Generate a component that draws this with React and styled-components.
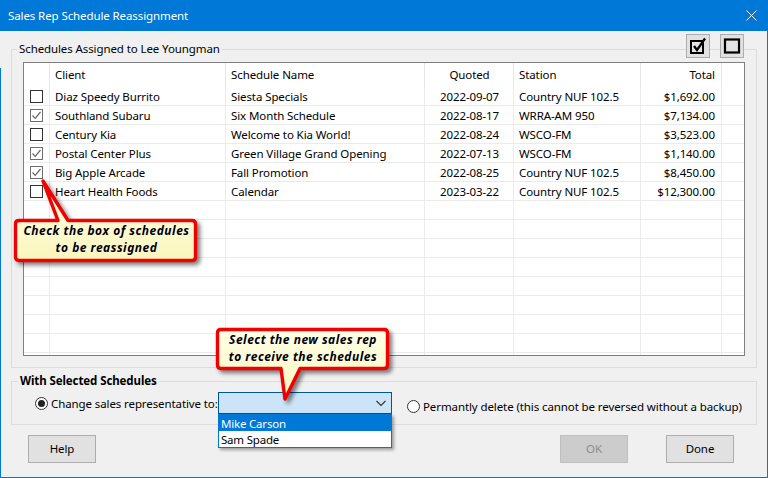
import { createGlobalStyle, styled } from "styled-components";

const GlobalStyle = createGlobalStyle`
  html, body {
    margin: 0;
    padding: 0;
    background: #f0f0f0;
  }
  body {
    font-family: "Noto Sans", "Open Sans", sans-serif;
    font-size: 11.5px;
    letter-spacing: -0.1px;
    color: #000;
  }
`;

const Window = styled.div`
  position: relative;
  width: 768px;
  height: 478px;
  box-sizing: border-box;
  overflow: hidden;
  background-color: #f0f0f0;
  background-image: linear-gradient(#0078d7, #0078d7), linear-gradient(#0078d7, #0078d7);
  background-position: left 68px, right 31px;
  background-size: 1px 100%;
  background-repeat: no-repeat;
  border-bottom: 1px solid #0078d7;
`;

const TitleBar = styled.div`
  display: flex;
  align-items: center;
  justify-content: space-between;
  height: 31px;
  padding: 0 11px 0 8px;
  background: #0078d7;
  color: #fff;
`;

const Body = styled.div`
  display: flex;
  flex-direction: column;
  padding: 10px 11px 0;
`;

const Group = styled.fieldset`
  margin: ${(p) => (p.$second ? "5px" : "0")} 0 0;
  padding: 0;
  min-width: 0;
  border: 1px solid #dcdcdc;
`;

const Legend = styled.legend`
  margin-left: ${(p) => (p.$bold ? "6px" : "5px")};
  padding: 0 2px;
  height: 16px;
  line-height: 15px;
  font-weight: ${(p) => (p.$bold ? 700 : 400)};
`;

const GridWrap = styled.div`
  padding: 5px 11px 11px;
`;

const Grid = styled.div`
  height: 292px;
  overflow: hidden;
  border: 1px solid #808080;
  background: #fff;
`;

const HeaderRow = styled.div`
  display: grid;
  grid-template-columns: 26px 176px 199px 89px 127px 81px 1fr;
  height: 24px;
`;

const HeaderCell = styled.div`
  box-sizing: border-box;
  display: flex;
  align-items: center;
  justify-content: ${(p) => p.$align || "flex-start"};
  padding: ${(p) => (p.$align === "center" ? "0 5px 1px 6px" : "0 6px 1px 5px")};
  border-right: ${(p) => (p.$last ? "none" : "1px solid #e5e5e5")};
`;

const Row = styled.div`
  display: grid;
  grid-template-columns: 26px 176px 199px 89px 127px 81px 1fr;
  height: 19px;
  box-sizing: border-box;
  border-bottom: 1px solid #ebebeb;
`;

const Cell = styled.div`
  box-sizing: border-box;
  display: flex;
  align-items: center;
  justify-content: ${(p) => p.$align || "flex-start"};
  padding: ${(p) => (p.$align === "center" ? "0 5px 0 6px" : "0 6px 0 5px")};
  white-space: nowrap;
  border-right: ${(p) => (p.$last ? "none" : "1px solid #ebebeb")};
`;

const CheckCell = styled(Cell)`
  padding: 0 1px 0 0;
  justify-content: center;
`;

const CheckBox = styled.span`
  display: flex;
  align-items: center;
  justify-content: center;
  box-sizing: border-box;
  width: 13px;
  height: 13px;
  background: #fff;
  border: 1px solid ${(p) => (p.$checked ? "#6e6e6e" : "#333")};
`;

const SideButton = styled.button`
  position: absolute;
  top: 34px;
  left: ${(p) => p.$left}px;
  display: flex;
  align-items: center;
  justify-content: center;
  width: 24px;
  height: 24px;
  padding: 0;
  background: #e1e1e1;
  border: 1px solid #adadad;
`;

const SelectedRow = styled.div`
  display: flex;
  align-items: flex-start;
  padding: 3px 0 7px 23px;
`;

const Option = styled.label`
  display: flex;
  align-items: center;
  gap: 3px;
  box-sizing: border-box;
  flex: none;
  height: 22px;
  white-space: nowrap;
  width: ${(p) => (p.$wide ? "183px" : "auto")};
  margin: ${(p) => (p.$wide ? "0" : "3px 0 0 15px")};
`;

const Radio = styled.span`
  display: flex;
  align-items: center;
  justify-content: center;
  box-sizing: border-box;
  flex: none;
  width: 13px;
  height: 13px;
  border: 1px solid #333;
  border-radius: 50%;
  background: #fff;
  &::after {
    content: "";
    display: ${(p) => (p.$on ? "block" : "none")};
    width: 7px;
    height: 7px;
    border-radius: 50%;
    background: #222;
  }
`;

const ComboWrap = styled.div`
  position: relative;
  flex: none;
  width: 174px;
`;

const Combo = styled.div`
  display: flex;
  align-items: center;
  justify-content: flex-end;
  box-sizing: border-box;
  height: 22px;
  padding-right: 4px;
  background: #cce4f7;
  border: 1px solid #005499;
`;

const ComboList = styled.div`
  position: absolute;
  top: 22px;
  left: 0;
  right: 0;
  z-index: 2;
  border: 1px solid #0078d7;
  background: #fff;
  box-shadow: 2px 2px 3px rgba(0, 0, 0, 0.35);
`;

const ComboItem = styled.div`
  height: 16px;
  line-height: 17px;
  padding: 0 2px;
  letter-spacing: -0.2px;
  background: ${(p) => (p.$selected ? "#0078d7" : "#fff")};
  color: ${(p) => (p.$selected ? "#fff" : "#000")};
`;

const Footer = styled.div`
  display: flex;
  gap: 38px;
  padding: 10px 23px 0 17px;
`;

const DialogButton = styled.button`
  width: 68px;
  height: 28px;
  padding: 0 0 1px;
  font: inherit;
  letter-spacing: inherit;
  color: ${(p) => (p.disabled ? "#8c8c8c" : "#000")};
  background: ${(p) => (p.disabled ? "#cccccc" : "#e1e1e1")};
  border: 1px solid ${(p) => (p.disabled ? "#bfbfbf" : "#adadad")};
  margin-right: ${(p) => (p.$push ? "auto" : "0")};
`;

const Callout = styled.div`
  position: absolute;
  z-index: 3;
  left: ${(p) => p.$left}px;
  top: ${(p) => p.$top}px;
  width: ${(p) => p.$width}px;
  height: ${(p) => p.$height}px;
`;

const CalloutShape = styled.svg`
  display: block;
  overflow: visible;
  filter: drop-shadow(3px 3px 2px rgba(0, 0, 0, 0.5));
`;

const CalloutText = styled.div`
  position: absolute;
  top: ${(p) => p.$top}px;
  left: 0;
  right: ${(p) => p.$inset || 0}px;
  text-align: center;
  font-size: 12px;
  font-weight: 700;
  font-style: italic;
  line-height: 17px;
  letter-spacing: 0.5px;
  text-shadow: 0 0 2px #fff;
`;

const rows = [
  ["Diaz Speedy Burrito", "Siesta Specials", "2022-09-07", "Country NUF 102.5", "$1,692.00", false],
  ["Southland Subaru", "Six Month Schedule", "2022-08-17", "WRRA-AM 950", "$7,134.00", true],
  ["Century Kia", "Welcome to Kia World!", "2022-08-24", "WSCO-FM", "$3,523.00", false],
  ["Postal Center Plus", "Green Village Grand Opening", "2022-07-13", "WSCO-FM", "$1,140.00", true],
  ["Big Apple Arcade", "Fall Promotion", "2022-08-25", "Country NUF 102.5", "$8,450.00", true],
  ["Heart Health Foods", "Calendar", "2023-03-22", "Country NUF 102.5", "$12,300.00", false],
];

const emptyRows = Array.from({ length: 9 }, (_, i) => i);

const Check = () => (
  <svg width="11" height="11" viewBox="0 0 11 11">
    <path d="M1.5 5.5 L4.2 8.3 L9.5 2" fill="none" stroke="#666" strokeWidth="1.2" />
  </svg>
);

const Gradient = ({ id }) => (
  <defs>
    <linearGradient id={id} x1="0" y1="0" x2="0" y2="1">
      <stop offset="0" stopColor="#ffffe6" />
      <stop offset="1" stopColor="#fbf6bd" />
    </linearGradient>
  </defs>
);

export default function App() {
  return (
    <Window>
      <GlobalStyle />
      <TitleBar>
        <span>Sales Rep Schedule Reassignment</span>
        <svg width="11" height="11" viewBox="0 0 11 11">
          <path d="M0.5 0.5 L10.5 10.5 M10.5 0.5 L0.5 10.5" stroke="#fff" strokeWidth="1" />
        </svg>
      </TitleBar>

      <Body>
        <Group>
          <Legend>Schedules Assigned to Lee Youngman</Legend>
          <GridWrap>
            <Grid>
              <HeaderRow>
                <HeaderCell />
                <HeaderCell>Client</HeaderCell>
                <HeaderCell>Schedule Name</HeaderCell>
                <HeaderCell $align="center">Quoted</HeaderCell>
                <HeaderCell>Station</HeaderCell>
                <HeaderCell $align="flex-end">Total</HeaderCell>
                <HeaderCell $last />
              </HeaderRow>
              {rows.map((r) => (
                <Row key={r[0]}>
                  <CheckCell>
                    <CheckBox $checked={r[5]}>{r[5] && <Check />}</CheckBox>
                  </CheckCell>
                  <Cell>{r[0]}</Cell>
                  <Cell>{r[1]}</Cell>
                  <Cell $align="center">{r[2]}</Cell>
                  <Cell>{r[3]}</Cell>
                  <Cell $align="flex-end">{r[4]}</Cell>
                  <Cell $last />
                </Row>
              ))}
              {emptyRows.map((i) => (
                <Row key={i}>
                  <Cell />
                  <Cell />
                  <Cell />
                  <Cell />
                  <Cell />
                  <Cell />
                  <Cell $last />
                </Row>
              ))}
            </Grid>
          </GridWrap>
        </Group>

        <Group $second>
          <Legend $bold>With Selected Schedules</Legend>
          <SelectedRow>
            <Option $wide>
              <Radio $on />
              Change sales representative to:
            </Option>
            <ComboWrap>
              <Combo>
                <svg width="12" height="12" viewBox="0 0 12 12">
                  <path d="M1.5 4 L6 8.5 L10.5 4" fill="none" stroke="#333" strokeWidth="1.1" />
                </svg>
              </Combo>
              <ComboList>
                <ComboItem $selected>Mike Carson</ComboItem>
                <ComboItem>Sam Spade</ComboItem>
              </ComboList>
            </ComboWrap>
            <Option>
              <Radio />
              Permantly delete (this cannot be reversed without a backup)
            </Option>
          </SelectedRow>
        </Group>

        <Footer>
          <DialogButton $push>Help</DialogButton>
          <DialogButton disabled>OK</DialogButton>
          <DialogButton>Done</DialogButton>
        </Footer>
      </Body>

      <SideButton $left={686}>
        <svg width="18" height="18" viewBox="0 0 18 18">
          <rect x="2" y="4" width="12" height="12" fill="#e4e4e4" stroke="#000" strokeWidth="2" />
          <path d="M5 9 L8 13 L16 1.5" fill="none" stroke="#000" strokeWidth="2.2" />
        </svg>
      </SideButton>
      <SideButton $left={720}>
        <svg width="18" height="18" viewBox="0 0 18 18">
          <rect x="2" y="2.5" width="14" height="13" fill="#e4e4e4" stroke="#000" strokeWidth="2.2" />
        </svg>
      </SideButton>

      <Callout $left={10} $top={175} $width={195} $height={97}>
        <CalloutShape width="195" height="97" viewBox="10 175 195 97">
          <Gradient id="noteA" />
          <path
            d="M19 220.5 L58 220.5 L43 181 L68 220.5 L192 220.5 Q195.5 220.5 195.5 224 L195.5 257 Q195.5 260.5 192 260.5 L19 260.5 Q15.5 260.5 15.5 257 L15.5 224 Q15.5 220.5 19 220.5 Z"
            fill="url(#noteA)"
            stroke="#f00000"
            strokeWidth="3.4"
            strokeLinejoin="round"
          />
        </CalloutShape>
        <CalloutText $top={47} $inset={2}>
          Check the box of schedules
          <br />
          to be reassigned
        </CalloutText>
      </Callout>

      <Callout $left={212} $top={324} $width={182} $height={80}>
        <CalloutShape width="182" height="80" viewBox="212 324 182 80">
          <Gradient id="noteB" />
          <path
            d="M221 329.5 L384 329.5 Q387.5 329.5 387.5 333 L387.5 365 Q387.5 368.5 384 368.5 L300 368.5 L285 399 L281 368.5 L221 368.5 Q217.5 368.5 217.5 365 L217.5 333 Q217.5 329.5 221 329.5 Z"
            fill="url(#noteB)"
            stroke="#f00000"
            strokeWidth="3.4"
            strokeLinejoin="round"
          />
        </CalloutShape>
        <CalloutText $top={7}>
          Select the new sales rep
          <br />
          to receive the schedules
        </CalloutText>
      </Callout>
    </Window>
  );
}
